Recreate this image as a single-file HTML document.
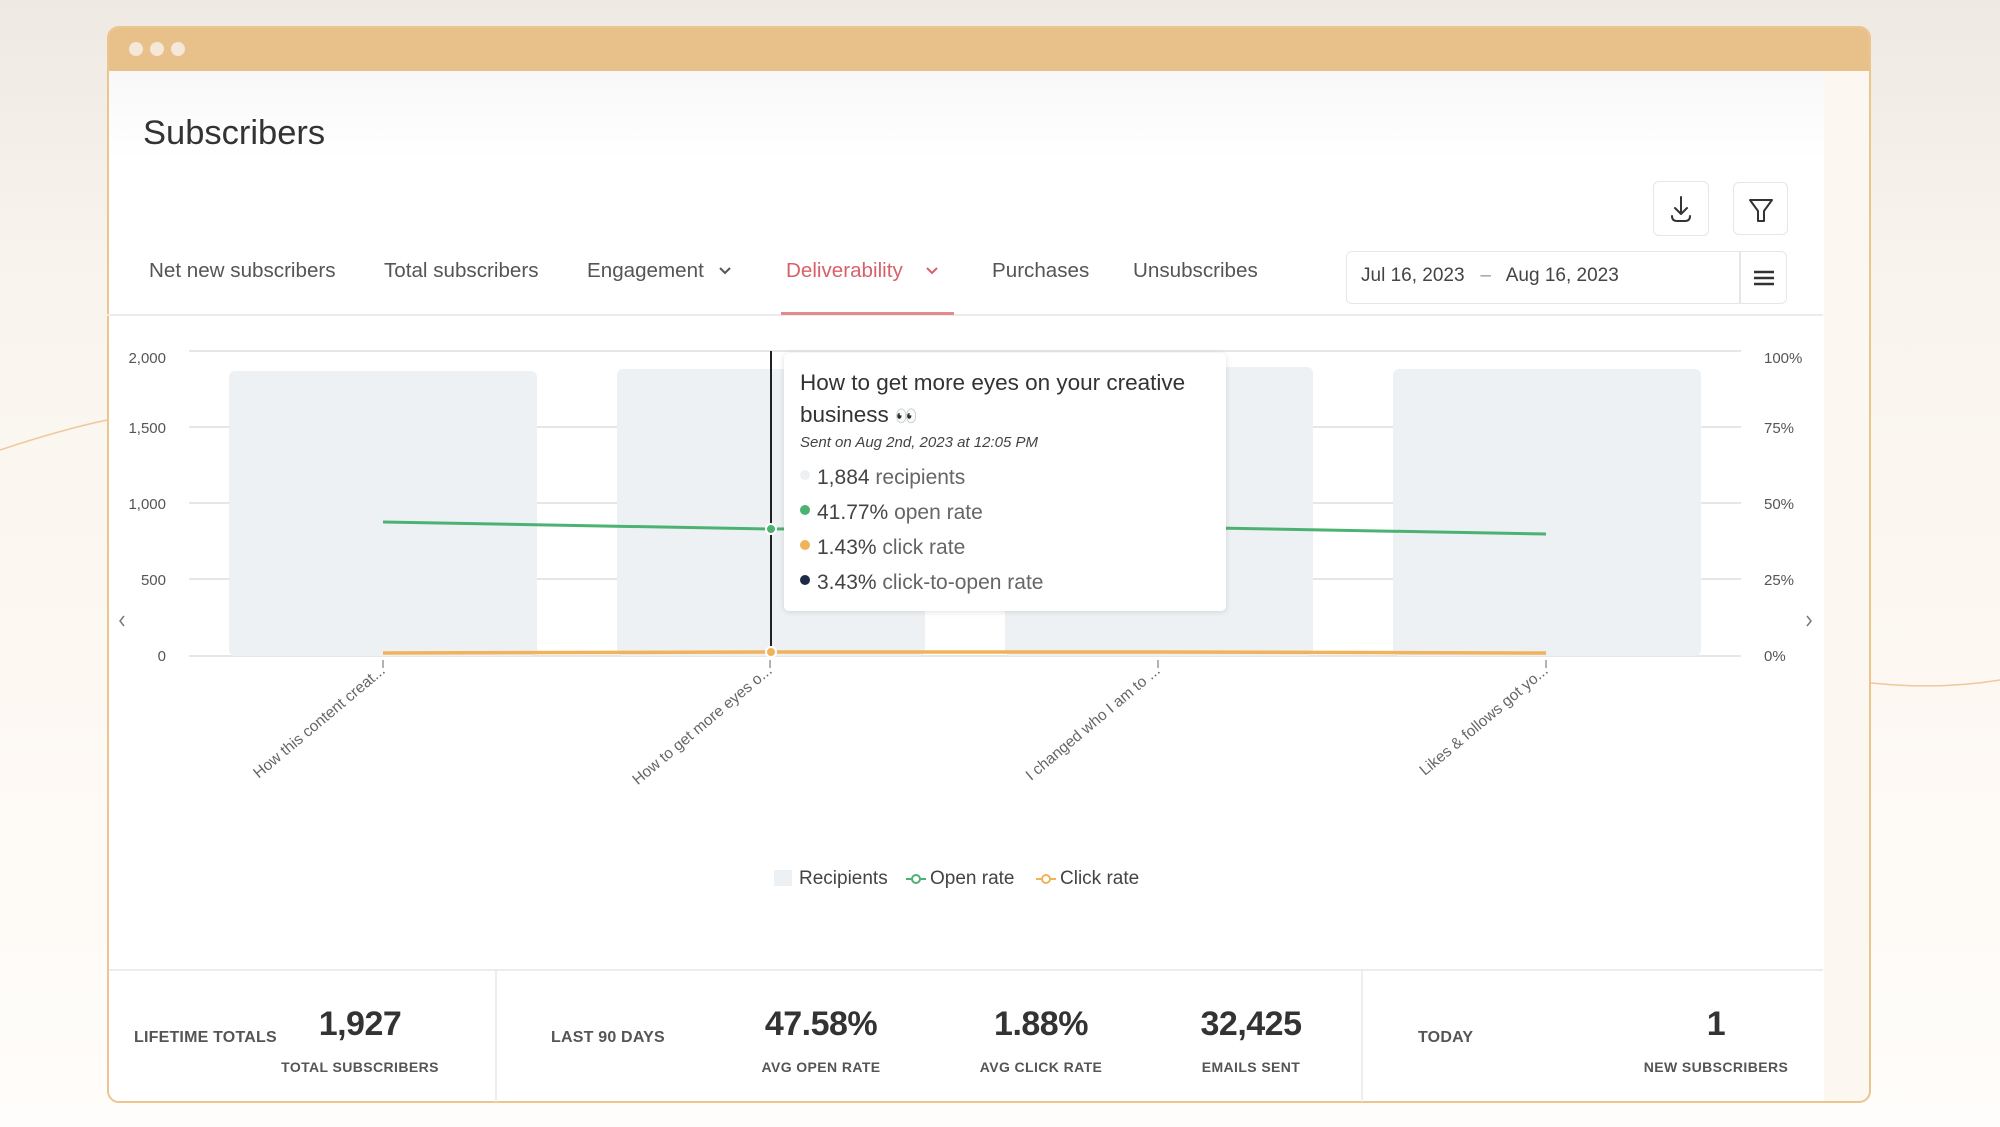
<!DOCTYPE html>
<html><head><meta charset="utf-8"><style>
*{margin:0;padding:0;box-sizing:border-box}
body{width:2000px;height:1127px;overflow:hidden;position:relative;font-family:"Liberation Sans",sans-serif;background:linear-gradient(180deg,#efe9e3 0%,#f9f4ee 25%,#fdf8f2 60%,#fffdfb 100%)}
.a{position:absolute;white-space:nowrap}
.win{position:absolute;left:107px;top:26px;width:1764px;height:1077px;border:2px solid #ecc48e;border-radius:12px;background:#fcf7f1;overflow:hidden}
.bar{position:absolute;left:0;top:0;width:100%;height:43px;background:#e8c08a}
.dot{position:absolute;top:14px;width:14px;height:14px;border-radius:50%;background:#f5e8d8}
.panel{position:absolute;left:0;top:43px;width:1715px;height:1032px;background:linear-gradient(180deg,#f8f8f8 0,#fff 90px,#fff)}
.tab{font-size:20.6px;color:#555;top:259px}
.btn{position:absolute;border:1.5px solid #e6e6e6;border-radius:6px;background:#fff}
.fl{font-size:16px;font-weight:bold;color:#555;letter-spacing:.2px}
.fn{font-size:34px;font-weight:bold;color:#333;transform:translateX(-50%);letter-spacing:-.5px}
.fs{font-size:14px;font-weight:bold;color:#555;transform:translateX(-50%);letter-spacing:.4px}
</style></head><body>
<svg class="a" style="left:0;top:0" width="2000" height="1127"><path d="M0 450 Q60 430 107 420" stroke="#f0c89a" stroke-width="1.5" fill="none"/><path d="M1871 683 Q1940 690 2000 680" stroke="#f0c89a" stroke-width="1.5" fill="none"/></svg>
<div class="win">
<div class="bar"><div class="dot" style="left:20px"></div><div class="dot" style="left:41px"></div><div class="dot" style="left:62px"></div></div>
<div class="panel"></div>
</div>
<div class="a" style="left:143px;top:114px;font-size:34.5px;color:#333">Subscribers</div>
<div class="btn" style="left:1653px;top:181px;width:56px;height:55px"><svg width="56" height="55"><path d="M27 15v17M21 26l6 6 6-6M18 34q0 5 5 5h8q5 0 5-5" stroke="#333" stroke-width="2" fill="none" stroke-linecap="round" stroke-linejoin="round"/></svg></div>
<div class="btn" style="left:1733px;top:182px;width:55px;height:53px"><svg width="55" height="53"><path d="M16 17h22l-8 11v10h-6V28z" stroke="#333" stroke-width="2" fill="none" stroke-linejoin="round"/></svg></div>
<div class="a tab" style="left:149px">Net new subscribers</div>
<div class="a tab" style="left:384px">Total subscribers</div>
<div class="a tab" style="left:587px">Engagement</div>
<svg class="a" style="left:718px;top:266px" width="14" height="10"><path d="M2 2l5 5 5-5" stroke="#555" stroke-width="2" fill="none"/></svg>
<div class="a tab" style="left:786px;color:#d9606a">Deliverability</div>
<svg class="a" style="left:925px;top:266px" width="14" height="10"><path d="M2 2l5 5 5-5" stroke="#d9606a" stroke-width="2" fill="none"/></svg>
<div class="a tab" style="left:992px">Purchases</div>
<div class="a tab" style="left:1133px">Unsubscribes</div>
<div class="a" style="left:107px;top:314px;width:1716px;height:2px;background:#ececec"></div>
<div class="a" style="left:781px;top:312px;width:173px;height:3px;background:#e28a8f"></div>
<div class="btn" style="left:1346px;top:251px;width:441px;height:53px"></div>
<div class="a" style="left:1739px;top:252px;width:1.5px;height:51px;background:#e6e6e6"></div>
<div class="a" style="left:1361px;top:265px;font-size:19px;color:#444">Jul 16, 2023 &nbsp;&nbsp;<span style="color:#999">–</span>&nbsp;&nbsp; Aug 16, 2023</div>
<svg class="a" style="left:1752px;top:268px" width="24" height="20"><path d="M2 4h20M2 10h20M2 16h20" stroke="#333" stroke-width="2.5"/></svg>
<svg class="a" style="left:0;top:0" width="2000" height="1127" font-family="Liberation Sans,sans-serif">
<g stroke="#e6e6e6" stroke-width="2"><path d="M189 351H1741M189 427H1741M189 503H1741M189 579H1741M189 656H1741"/></g>
<g fill="#eef1f3"><rect x="229" y="371" width="308" height="285" rx="6"/><rect x="617" y="369" width="308" height="287" rx="6"/><rect x="1005" y="367" width="308" height="289" rx="6"/><rect x="1393" y="369" width="308" height="287" rx="6"/></g>
<g fill="#555" font-size="15" text-anchor="end"><text x="166" y="363">2,000</text><text x="166" y="433">1,500</text><text x="166" y="509">1,000</text><text x="166" y="585">500</text><text x="166" y="661">0</text></g>
<g fill="#555" font-size="15"><text x="1764" y="363">100%</text><text x="1764" y="433">75%</text><text x="1764" y="509">50%</text><text x="1764" y="585">25%</text><text x="1764" y="661">0%</text></g>
<g stroke="#999" stroke-width="1.5"><path d="M383 660v8M770 660v8M1158 660v8M1546 660v8"/></g>
<path d="M383 522L770 529L1158 527L1546 534" stroke="#4cb272" stroke-width="3" fill="none"/>
<path d="M383 653L770 652L1158 652L1546 653" stroke="#f0b35c" stroke-width="3.5" fill="none"/>
<path d="M771 351V646" stroke="#222" stroke-width="2"/>
<circle cx="771" cy="529" r="5" fill="#4cb272" stroke="#fff" stroke-width="2"/>
<circle cx="771" cy="652" r="5" fill="#f0b35c" stroke="#fff" stroke-width="2"/>
<g fill="#666" font-size="15.5" text-anchor="end">
<text transform="translate(386,672) rotate(-40)">How this content creat...</text>
<text transform="translate(773,672) rotate(-40)">How to get more eyes o...</text>
<text transform="translate(1161,672) rotate(-40)">I changed who I am to ...</text>
<text transform="translate(1549,672) rotate(-40)">Likes &amp; follows got yo...</text></g>
<path d="M124 616l-4 5 4 5" stroke="#777" stroke-width="1.5" fill="none"/><path d="M1807 616l4 5-4 5" stroke="#777" stroke-width="1.5" fill="none"/>
<rect x="784" y="353" width="442" height="258" rx="5" fill="#fff" style="filter:drop-shadow(0 1px 3px rgba(0,0,0,.12))"/>
<text x="800" y="390" font-size="22.5" fill="#333">How to get more eyes on your creative</text>
<text x="800" y="422" font-size="22.5" fill="#333">business <tspan font-size="18">👀</tspan></text>
<text x="800" y="447" font-size="15" font-style="italic" fill="#444">Sent on Aug 2nd, 2023 at 12:05 PM</text>
<g font-size="21" fill="#444"><circle cx="805" cy="475" r="5" fill="#eef1f3"/><text x="817" y="484">1,884 <tspan fill="#666">recipients</tspan></text>
<circle cx="805" cy="510" r="5" fill="#4cb272"/><text x="817" y="519">41.77% <tspan fill="#666">open rate</tspan></text>
<circle cx="805" cy="545" r="5" fill="#f0b35c"/><text x="817" y="554">1.43% <tspan fill="#666">click rate</tspan></text>
<circle cx="805" cy="580" r="5" fill="#1e2a45"/><text x="817" y="589">3.43% <tspan fill="#666">click-to-open rate</tspan></text></g>
<rect x="774" y="870" width="18" height="16" fill="#eef1f3"/>
<text x="799" y="884" font-size="19" fill="#444">Recipients</text>
<path d="M906 879h20" stroke="#4cb272" stroke-width="2"/><circle cx="916" cy="879" r="4" fill="#fff" stroke="#4cb272" stroke-width="2"/>
<text x="930" y="884" font-size="19" fill="#444">Open rate</text>
<path d="M1036 879h20" stroke="#f0b35c" stroke-width="2"/><circle cx="1046" cy="879" r="4" fill="#fff" stroke="#f0b35c" stroke-width="2"/>
<text x="1060" y="884" font-size="19" fill="#444">Click rate</text>
<path d="M109 970H1823" stroke="#ececec" stroke-width="2"/>
<path d="M496 970V1102M1362 970V1102" stroke="#e8e8e8" stroke-width="1.5"/>
</svg>
<div class="a fl" style="left:134px;top:1029px">LIFETIME TOTALS</div>
<div class="a fn" style="left:360px;top:1005px">1,927</div>
<div class="a fs" style="left:360px;top:1059px">TOTAL SUBSCRIBERS</div>
<div class="a fl" style="left:551px;top:1029px">LAST 90 DAYS</div>
<div class="a fn" style="left:821px;top:1005px">47.58%</div>
<div class="a fs" style="left:821px;top:1059px">AVG OPEN RATE</div>
<div class="a fn" style="left:1041px;top:1005px">1.88%</div>
<div class="a fs" style="left:1041px;top:1059px">AVG CLICK RATE</div>
<div class="a fn" style="left:1251px;top:1005px">32,425</div>
<div class="a fs" style="left:1251px;top:1059px">EMAILS SENT</div>
<div class="a fl" style="left:1418px;top:1029px">TODAY</div>
<div class="a fn" style="left:1716px;top:1005px">1</div>
<div class="a fs" style="left:1716px;top:1059px">NEW SUBSCRIBERS</div>
</body></html>
